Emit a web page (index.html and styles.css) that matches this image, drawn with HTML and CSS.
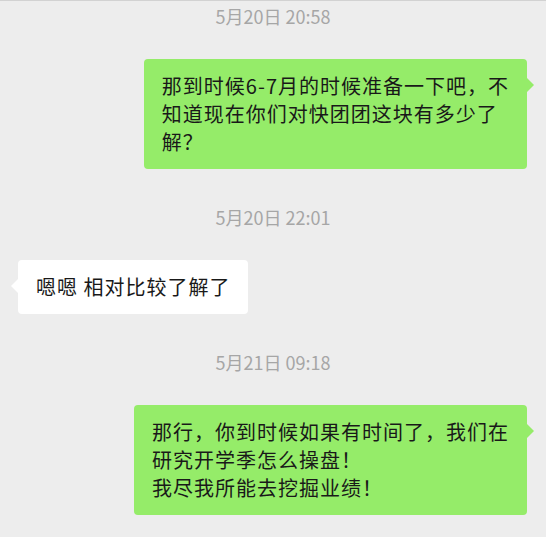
FILE: index.html
```html
<!DOCTYPE html>
<html lang="zh-CN">
<head>
  <meta charset="UTF-8" />
  <meta name="viewport" content="width=device-width, initial-scale=1.0"/>
  <title>聊天记录</title>
  <link rel="stylesheet" href="styles.css">
</head>
<body>
  <div class="chat">
    <div class="time">5月20日 20:58</div>
    <div class="row self">
      <div class="bubble green">那到时候6-7月的时候准备一下吧，不<br>知道现在你们对快团团这块有多少了<br>解？</div>
    </div>

    <div class="time">5月20日 22:01</div>
    <div class="row other">
      <div class="bubble white">嗯嗯 相对比较了解了</div>
    </div>

    <div class="time">5月21日 09:18</div>
    <div class="row self">
      <div class="bubble green">那行，你到时候如果有时间了，我们在<br>研究开学季怎么操盘！<br>我尽我所能去挖掘业绩！</div>
    </div>
  </div>
</body>
</html>
```

FILE: styles.css
```css
body {
  margin: 0;
  background: #ededed;
  font-family: "Noto Sans CJK SC", "Noto Sans", sans-serif;
  color: #191919;
  border-top: 1px solid #d2d2d2;
  height: 536px;
  overflow: hidden;
}

.chat {
  padding-top: 5px;
}

.time {
  text-align: center;
  font-size: 18px;
  line-height: 20px;
  color: #a6a6a6;
  margin-top: 38px;
}

.time:first-child {
  margin-top: 0;
}

.row {
  display: flex;
  margin-top: 33px;
  padding: 0 19px 0 18px;
}

.row.self {
  justify-content: flex-end;
}

.row.other {
  justify-content: flex-start;
}

.bubble {
  position: relative;
  padding: 13px 18px;
  border-radius: 4px;
  font-size: 20px;
  line-height: 28px;
  letter-spacing: 1px;
}

.green {
  background: #95ec69;
}

.white {
  background: #fff;
}

/* little arrow pointing at the sender */
.bubble::after {
  content: "";
  position: absolute;
  top: 19px;
  border-top: 7px solid transparent;
  border-bottom: 7px solid transparent;
}

.green::after {
  right: -7px;
  border-left: 7px solid #95ec69;
}

.white::after {
  left: -7px;
  border-right: 7px solid #fff;
}
```
